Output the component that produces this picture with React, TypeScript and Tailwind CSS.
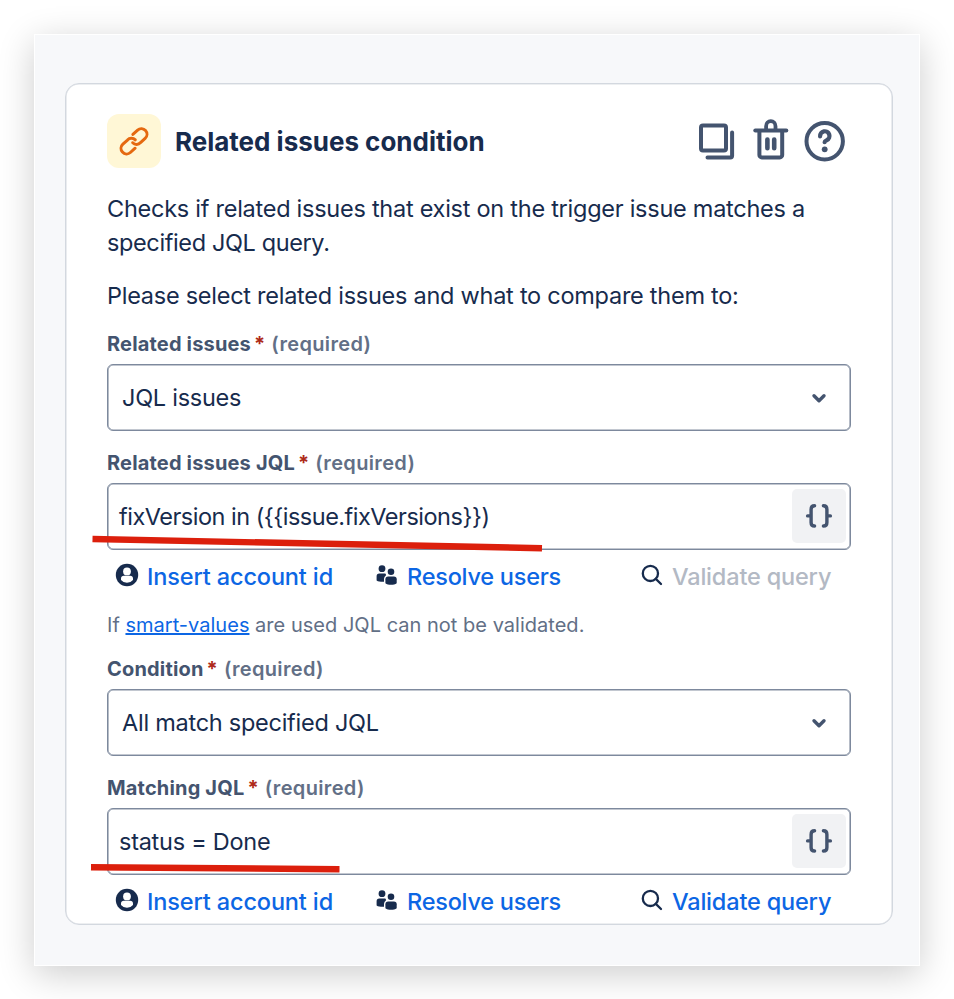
import React from "react";

const REQUIRED = "(required)";

const LinkIcon = () => (
  <svg width="34" height="34" viewBox="0 0 34 34" fill="none">
    <g
      stroke="#e56910"
      strokeWidth="3"
      strokeLinecap="round"
      strokeLinejoin="round"
      transform="translate(17 17.3) rotate(-42)"
    >
      <path d="M-3.8 5.9H-10.2A5.6 5.6 0 0 1 -10.2 -5.3H-4A5.2 5.2 0 0 1 1.9 -0.2" />
      <path d="M3.8 -5.9H10.2A5.6 5.6 0 0 1 10.2 5.3H4A5.2 5.2 0 0 1 -1.9 0.2" />
    </g>
  </svg>
);

const CopyIcon = () => (
  <svg width="38" height="42" viewBox="0 0 38 42" fill="none">
    <rect x="3" y="5.4" width="25" height="25" rx="2" stroke="#44546f" strokeWidth="4" />
    <path
      d="M34.1 12.4V35.7A1.7 1.7 0 0 1 32.4 37.4H9.5"
      stroke="#44546f"
      strokeWidth="4"
      strokeLinecap="round"
    />
  </svg>
);

const TrashIcon = () => (
  <svg width="36" height="44" viewBox="0 0 36 44" fill="none" stroke="#44546f">
    <path d="M2.3 11.4H33.3" strokeWidth="4" strokeLinecap="round" />
    <path d="M13.1 11V7.2A4.7 5 0 0 1 22.5 7.2V11" strokeWidth="3.8" />
    <path d="M6.4 11.4V36A2.4 2.4 0 0 0 8.8 38.4H26.8A2.4 2.4 0 0 0 29.2 36V11.4" strokeWidth="4" />
    <path d="M14.4 20.5V29.3M21.2 20.5V29.3" strokeWidth="4.6" strokeLinecap="round" />
  </svg>
);

const HelpIcon = () => (
  <svg width="42" height="42" viewBox="0 0 42 42" fill="none">
    <circle cx="20.7" cy="21.2" r="18.2" stroke="#44546f" strokeWidth="4" />
    <path
      d="M16.1 16.3A4.7 4.7 0 1 1 22.9 20.2C21.3 21 20.6 21.4 20.6 22.2"
      stroke="#44546f"
      strokeWidth="4.2"
      strokeLinecap="round"
    />
    <circle cx="20.7" cy="29.3" r="2.9" fill="#44546f" />
  </svg>
);

const ChevronIcon = () => (
  <svg width="16" height="12" viewBox="0 0 16 12" fill="none">
    <path
      d="M3 3.8L8 8.8L13 3.8"
      stroke="#44546f"
      strokeWidth="3.4"
      strokeLinecap="round"
      strokeLinejoin="round"
    />
  </svg>
);

const BracesIcon = () => (
  <svg
    width="28"
    height="26"
    viewBox="0 0 28 26"
    fill="none"
    stroke="#44546f"
    strokeWidth="3.4"
    strokeLinecap="round"
  >
    <path d="M9.6 2.8C6.9 2.8 6.1 4.2 6.1 6.4V19.4C6.1 21.6 6.9 23 9.6 23M6 12.9H2.6" />
    <path d="M18.4 2.8C21.1 2.8 21.9 4.2 21.9 6.4V19.4C21.9 21.6 21.1 23 18.4 23M22 12.9H25.4" />
  </svg>
);

const AccountIcon = () => (
  <svg className="-mt-1" width="24" height="24" viewBox="0 0 24 24">
    <circle cx="12" cy="12" r="11.2" fill="#172b4d" />
    <circle cx="12" cy="8.4" r="3.9" fill="#fff" />
    <path
      d="M6 17V15.6A2.9 2.9 0 0 1 8.9 12.8H15.1A2.9 2.9 0 0 1 18 15.6V17A7.8 7.8 0 0 1 6 17Z"
      fill="#fff"
    />
  </svg>
);

const UsersIcon = () => (
  <svg className="-mt-1" width="22" height="22" viewBox="0 0 22 22" fill="#172b4d">
    <circle cx="7" cy="4.7" r="3.4" />
    <circle cx="16" cy="7.8" r="3.3" />
    <path d="M1.6 12.2A2.7 2.7 0 0 1 4.3 9.5H10.1A2.5 2.5 0 0 1 10.9 10.3V11.5A4.4 4.4 0 0 0 9 15V17.8C6.1 18 3.4 17.6 1.6 16.4Z" />
    <path d="M10.4 15.2A2.8 2.8 0 0 1 13.2 12.4H18.9A2.8 2.8 0 0 1 21.7 15.2V19.2C19.1 21.3 13 21.3 10.4 19.2Z" />
  </svg>
);

const SearchIcon = () => (
  <svg
    className="-mt-1"
    width="22"
    height="22"
    viewBox="0 0 22 22"
    fill="none"
    stroke="#172b4d"
    strokeWidth="2.3"
  >
    <circle cx="9.4" cy="9.4" r="7.6" />
    <path d="M14.8 14.9L20 20" strokeLinecap="round" />
  </svg>
);

type FieldProps = {
  label: string;
  children: React.ReactNode;
};

const Field = ({ label, children }: FieldProps) => (
  <div className="flex flex-col gap-2">
    <div className="flex h-6 items-center whitespace-nowrap text-[20px] leading-6 font-bold tracking-[0.17px] text-[#44546f]">
      <span>{label}</span>
      <span className="ml-[3px] text-[#ae2a19]">*</span>
      <span className="ml-[6px] font-semibold tracking-[0.34px] text-[#626f86]">{REQUIRED}</span>
    </div>
    {children}
  </div>
);

const SelectBox = ({ value }: { value: string }) => (
  <div className="flex h-[67px] items-center justify-between rounded-md border border-[#7d899d] pr-[23px] pl-[14px] inset-shadow-[0_0_0_0.6px_#8590a2]">
    <span>{value}</span>
    <ChevronIcon />
  </div>
);

type QueryBoxProps = {
  children: React.ReactNode;
  mark: React.ReactNode;
};

const QueryBox = ({ children, mark }: QueryBoxProps) => (
  <div className="relative flex h-[67px] items-center justify-between rounded-md border border-[#7d899d] pr-1 pl-[11px] inset-shadow-[0_0_0_0.6px_#8590a2]">
    {children}
    <button className="-mt-px flex h-[54px] w-[54px] items-center justify-center rounded-[5px] bg-[#f1f2f4]">
      <BracesIcon />
    </button>
    {mark}
  </div>
);

const QueryActions = ({ disabled = false }: { disabled?: boolean }) => (
  <div className="flex h-[54px] items-center pl-2 whitespace-nowrap font-medium tracking-[-0.18px] text-[#0c66e4]">
    <div className="flex w-[260px] items-center gap-2">
      <AccountIcon />
      <span className="tracking-[-0.14px]">Insert account id</span>
    </div>
    <div className="flex w-[266px] items-center gap-[10px]">
      <UsersIcon />
      <span className="tracking-[-0.24px]">Resolve users</span>
    </div>
    <div className="flex items-center gap-[9px]">
      <SearchIcon />
      <span className={disabled ? "text-[#b3b9c4]" : ""}>Validate query</span>
    </div>
  </div>
);

export default function App() {
  return (
    <div className="h-[999px] w-[954px] overflow-hidden bg-white p-[34px] font-['Inter',sans-serif] text-[23.5px] leading-[34px] tracking-[-0.26px] text-[#172b4d]">
      <div className="h-[932px] w-[886px] border border-white bg-[#f7f8fa] pt-[48px] pl-[30px] shadow-[0_8px_34px_rgba(0,0,0,0.2)]">
        <div className="h-[842px] w-[828px] rounded-[14px] border border-[#d3d8df] bg-white px-[41px] pt-[30px] inset-shadow-[0_0_0_0.6px_#dcdfe4]">
          <div className="flex h-[54px] items-center">
            <div className="flex h-[54px] w-[54px] items-center justify-center rounded-xl bg-[#fff7d6]">
              <LinkIcon />
            </div>
            <h1 className="mt-[2px] ml-[14px] flex-1 whitespace-nowrap text-[26px] font-bold tracking-[-0.01px]">
              Related issues condition
            </h1>
            <div className="mr-[5px] flex items-center">
              <CopyIcon />
              <div className="ml-[17px]">
                <TrashIcon />
              </div>
              <div className="ml-[15px]">
                <HelpIcon />
              </div>
            </div>
          </div>

          <p className="mt-6 whitespace-nowrap">
            Checks if related issues that exist on the trigger issue matches a
            <br />
            <span className="tracking-[-0.38px]">specified JQL query.</span>
          </p>
          <p className="mt-[19px] mb-[19px] whitespace-nowrap">
            Please select related issues and what to compare them to:
          </p>

          <Field label="Related issues">
            <SelectBox value="JQL issues" />
          </Field>
          <div className="h-5" />
          <Field label="Related issues JQL">
            <QueryBox
              mark={
                <svg className="absolute top-[50px] -left-[16px]" width="452" height="22">
                  <path d="M0.5 5L450 14.2" stroke="#dc1f0c" strokeWidth="6.4" />
                </svg>
              }
            >
              <span className="tracking-[-0.5px]">{"fixVersion in ({{issue.fixVersions}})"}</span>
            </QueryBox>
          </Field>
          <QueryActions disabled />
          <p className="h-[53px] whitespace-nowrap pt-1 text-[20px] tracking-[0.02px] text-[#626f86]">
            If <span className="text-[#0c66e4] underline">smart-values</span> are used JQL can not
            be validated.
          </p>
          <Field label="Condition">
            <SelectBox value="All match specified JQL" />
          </Field>
          <div className="h-5" />
          <Field label="Matching JQL">
            <QueryBox
              mark={
                <svg className="absolute top-[51px] -left-[18px]" width="252" height="20">
                  <path d="M1 7.3L249.5 9.2" stroke="#dc1f0c" strokeWidth="6.4" />
                </svg>
              }
            >
              <span>status = Done</span>
            </QueryBox>
          </Field>
          <QueryActions />
        </div>
      </div>
    </div>
  );
}
